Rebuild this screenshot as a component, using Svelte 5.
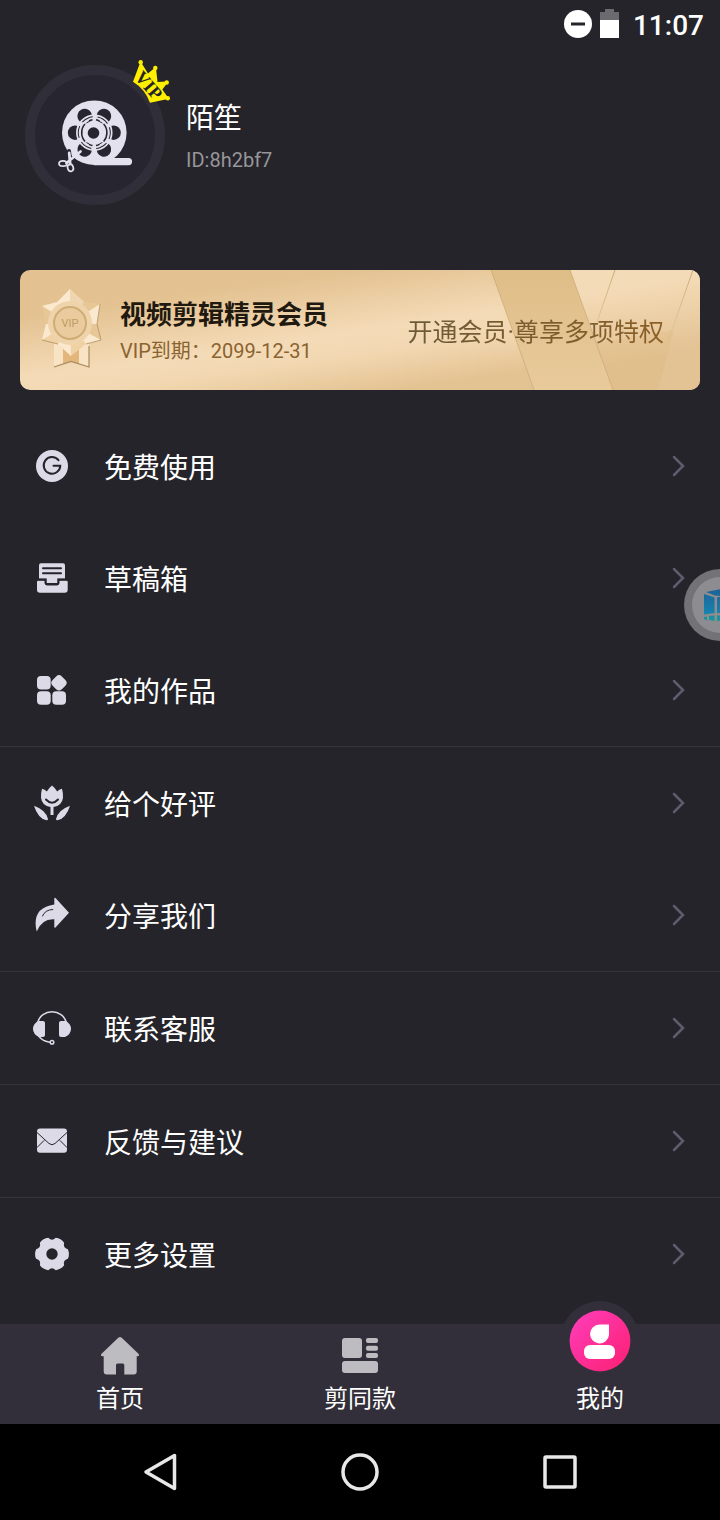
<script>
    const groups = [
        [
            { id: "free", label: "免费使用" },
            { id: "drafts", label: "草稿箱" },
            { id: "works", label: "我的作品" },
        ],
        [
            { id: "praise", label: "给个好评" },
            { id: "share", label: "分享我们" },
        ],
        [{ id: "support", label: "联系客服" }],
        [{ id: "feedback", label: "反馈与建议" }],
        [{ id: "settings", label: "更多设置" }],
    ];

    // outline of the settings gear: six lobes round the centre 20,20
    const at = (r, deg) => {
        const a = (deg * Math.PI) / 180;
        return `${(20 + r * Math.cos(a)).toFixed(2)} ${(20 + r * Math.sin(a)).toFixed(2)}`;
    };
    let gear = `M${at(16.6, -17)}`;
    for (let k = 0; k < 360; k += 60) {
        gear += `Q${at(18, k)} ${at(16.6, k + 17)}Q${at(12.4, k + 30)} ${at(16.6, k + 43)}`;
    }
    gear += "Z";

    const holes = [0, 60, 120, 180, 240, 300];
</script>

<main>
    <header class="status">
        <svg width="28" height="28" viewBox="0 0 28 28">
            <circle cx="14" cy="14" r="14" fill="#fff" />
            <rect x="7" y="12.500" width="14" height="3" fill="#25242a" />
        </svg>
        <svg class="battery" width="19" height="30" viewBox="0 0 19 30">
            <path d="M5 0h9v3h5v8H0V3h5z" fill="#6b6a6f" />
            <path d="M0 11h19v18H0z" fill="#fff" />
        </svg>
        <time>11:07</time>
    </header>

    <section class="profile">
        <div class="avatar">
            <svg width="120" height="120" viewBox="0 0 120 120">
                <path d="M59 83h34.500a3.500 3.500 0 0 1 0 7.200H59z" fill="#e4e1ee" />
                <circle cx="59.300" cy="57.700" r="32.300" fill="#e4e1ee" />
                {#each holes as deg}
                    <circle cx="78.500" cy="57.700" r="7.300" fill="#272530" transform="rotate({deg} 59.3 57.7)" />
                {/each}
                <g fill="none">
                    <circle cx="59.300" cy="57.700" r="15.500" stroke="#e4e1ee" stroke-width="5.500" />
                    <circle cx="59.300" cy="57.700" r="16" stroke="#272530" stroke-width="1" stroke-dasharray="12 4.750" transform="rotate(-20 59.3 57.7)" />
                    <path d="M50 49a13 13 0 0 0 0 17.400M68.600 49a13 13 0 0 1 0 17.400M54 46a13 13 0 0 1 3.500-1.200M61 44.800a13 13 0 0 1 3.500 1.200M54 69.400a13 13 0 0 0 3.500 1.200M61 70.600a13 13 0 0 0 3.500-1.200" stroke="#272530" stroke-width="1.500" />
                </g>
                <circle cx="58.500" cy="58" r="5.800" fill="#272530" />
                <g fill="none" stroke-linecap="round">
                    <path d="M34 76l1 8" stroke="#272530" stroke-width="4" />
                    <path d="M31.500 88l14-11.500M34.200 78l1 11" stroke="#e4e1ee" stroke-width="2.800" />
                    <ellipse cx="28" cy="88.500" rx="4" ry="2.700" stroke="#e4e1ee" stroke-width="1.700" />
                    <ellipse cx="35.500" cy="93" rx="2.800" ry="3.600" transform="rotate(-20 35 93)" stroke="#e4e1ee" stroke-width="1.700" />
                </g>
            </svg>
            <svg class="crown" width="40" height="46" viewBox="0 0 40 46">
                <g fill="#fff000">
                    <path d="M1 22.700L8 4h1.500l6.500 10.500L22.500 9h1.500l1.500 14 9-.5.8 1.500-5 6.500L36 38.500v1.500L18 43.700Q13 30 1 22.700z" />
                    <circle cx="8.700" cy="3.300" r="2.200" />
                    <circle cx="23.300" cy="9" r="2.200" />
                    <circle cx="34.700" cy="23.500" r="2.200" />
                    <circle cx="35.800" cy="39.200" r="2.200" />
                </g>
                <text x="16" y="32" text-anchor="middle" transform="rotate(49 16 27)">VIP</text>
            </svg>
        </div>
        <div class="info">
            <h1>陌笙</h1>
            <p>ID:8h2bf7</p>
        </div>
    </section>

    <a class="card" href="#vip">
        <svg class="sheen" viewBox="0 0 680 120" preserveAspectRatio="xMaxYMid slice">
            <defs>
                <linearGradient id="gold" gradientUnits="userSpaceOnUse" x1="0" y1="0" x2="25" y2="178">
                    <stop offset="0" stop-color="#e3c190" />
                    <stop offset="0.25" stop-color="#e3c190" />
                    <stop offset="0.6" stop-color="#f4dbb7" />
                    <stop offset="0.72" stop-color="#f2d8b2" />
                    <stop offset="0.95" stop-color="#e4c392" />
                </linearGradient>
                <linearGradient id="band" x1="0" y1="0" x2="0" y2="1">
                    <stop offset="0" stop-color="#dfbd87" />
                    <stop offset="1" stop-color="#e8ca9b" />
                </linearGradient>
                <linearGradient id="edge" gradientUnits="userSpaceOnUse" x1="600" y1="0" x2="620" y2="120">
                    <stop offset="0.15" stop-color="#f4dbb7" />
                    <stop offset="0.75" stop-color="#e3c293" />
                </linearGradient>
                <linearGradient id="crease" gradientUnits="userSpaceOnUse" x1="0" y1="0" x2="0" y2="80">
                    <stop offset="0" stop-color="#c9a873" />
                    <stop offset="1" stop-color="#c9a873" stop-opacity="0" />
                </linearGradient>
            </defs>
            <rect width="680" height="120" fill="url(#gold)" />
            <path d="M550 0h130v120h-87z" fill="url(#edge)" />
            <path d="M577 73l-13 47h74l16-60z" fill="#deb981" opacity="0.3" />
            <path d="M471 0h79l43 120h-79z" fill="url(#band)" />
            <path d="M471 0l43 120M550 0l43 120" stroke="#c9a873" stroke-width="1" opacity="0.7" />
            <path d="M595 0l-18 52M673 0l-28 80" stroke="url(#crease)" stroke-width="1" />
        </svg>
        <svg class="medal" width="64" height="84" viewBox="0 0 64 84">
            <path d="M14 55v24l17-5 18 5V55z" fill="#f8e3c4" />
            <path d="M23 56v20l8-2.500 8 2.500V56z" fill="#e3b67c" />
            <path d="M14 79l17-5.500L49 79V58" fill="none" stroke="#a98a60" stroke-width="1.200" />
            <path d="M30 1l14 13 16 2-3 20 4 16-15 4-15 12-13-12-16-4 4-16-4-18 17-4z" fill="#efd1a3" />
            <path d="M30 1l14 13-14 21-13-21zM60 16l-3 20-27-1zM61 52l-15 4-16-21zM31 68L18 56l12-21zM2 52l4-16 24-1zM2 18l15-4 13 21z" fill="#fae9cf" />
            <path d="M30 1v34l14-21zM60 16L30 35l14-21zM61 52L30 35l27 1zM2 18l28 17-24 1z" fill="#dfb983" opacity="0.4" />
            <path d="M60 16l-3 20 4 16-15 4M2 52l16 4" fill="none" stroke="#b09065" stroke-width="1" opacity="0.8" />
            <circle cx="30" cy="35" r="22" fill="#efd4ab" />
            <circle cx="30" cy="35" r="16" fill="#e9cb9d" stroke="#d0ac76" stroke-width="2" />
            <text x="30" y="39" text-anchor="middle">VIP</text>
        </svg>
        <div class="member">
            <h2>视频剪辑精灵会员</h2>
            <p>VIP到期：2099-12-31</p>
        </div>
        <span class="slogan">开通会员·尊享多项特权</span>
    </a>

    <nav class="menu">
        {#each groups as items}
            <ul>
                {#each items as item}
                    <li>
                        <a href="#{item.id}">
                            <svg class="icon" width="40" height="40" viewBox="0 0 40 40" fill="#dddae8">
                                {#if item.id === "free"}
                                    <circle cx="20" cy="20" r="16" />
                                    <path class="cut" d="M26.500 14.200A8.300 8.300 0 1 0 28.300 19.700H21.500" />
                                {:else if item.id === "drafts"}
                                    <path d="M9 5.300h22a2 2 0 0 1 2 2V20.500h-7.500v4.500h-11v-4.500H7V7.300a2 2 0 0 1 2-2z" />
                                    <path class="cut" d="M11 10.300h18M11 15.200h18" />
                                    <path d="M7 22.300h6.500v2.200a2 2 0 0 0 2 2h9a2 2 0 0 0 2-2v-2.200H34a1.700 1.700 0 0 1 1.700 1.700v7.700a3 3 0 0 1-3 3H8a3 3 0 0 1-3-3V24a1.700 1.700 0 0 1 2-1.700z" />
                                    <path class="cut" d="M5 21.700h8.500v2.800a2 2 0 0 0 2 2h9a2 2 0 0 0 2-2v-2.800H36" />
                                {:else if item.id === "works"}
                                    <rect x="5" y="6" width="13.700" height="13.500" rx="4" />
                                    <rect x="5" y="21.200" width="13.700" height="13.500" rx="4" />
                                    <rect x="20.300" y="21.200" width="13.700" height="13.500" rx="4" />
                                    <rect x="20.500" y="6.300" width="13" height="13" rx="4" transform="rotate(45 27 12.8)" />
                                {:else if item.id === "praise"}
                                    <path d="M10 5.800q3 .5 4.800 2.700 2-3.500 5.200-6 3.200 2.500 5.200 6 1.800-2.200 4.800-2.700 1.200 4 1 9-1 8-9.500 9.200V32h-3v-8Q10 23 9 14.800q-.2-5 1-9z" />
                                    <path class="cut" d="M14 16.500q6 6.500 12 0" />
                                    <path d="M2 22.700Q14 27 16 36q0 1.300-1.500 1.300Q6 35.500 2 22.700zM38 22.700Q26 27 24 36q0 1.300 1.500 1.300Q34 35.500 38 22.700z" />
                                {:else if item.id === "share"}
                                    <path d="M22.300 3.500q.3-1 1.200-.5L37 17.700 23.500 32.500q-1 .8-1.200-.5v-7.700Q10 23.500 4.700 36.500-1 13 22.300 9.500z" />
                                    <path class="cut thin" d="M10.500 21q2.500-6.300 10.300-6.500" />
                                {:else if item.id === "support"}
                                    <path class="line" d="M5.500 15C9 0 31 0 34.500 15M6.500 28q4.500 5.500 11.500 6.300" />
                                    <path d="M6 13h5q2 0 2 2v12q0 2-2 2H7Q1 26 1 21q0-5 5-8zM34 13h-5q-2 0-2 2v12q0 2 2 2h4q6-3 6-8 0-5-5-8z" />
                                    <circle class="line" cx="20" cy="34.300" r="1.800" />
                                {:else if item.id === "feedback"}
                                    <rect x="5" y="7.500" width="30" height="24.200" rx="3" />
                                    <path class="cut thin" d="M5 11.500l12 11q3 2.500 6 0l12-11M5 26.500l7-7M35 26.500l-7-7" />
                                {:else}
                                    <path d={gear} />
                                    <circle cx="20" cy="20" r="5.700" fill="#25242a" />
                                {/if}
                            </svg>
                            <span>{item.label}</span>
                            <svg class="arrow" width="16" height="24" viewBox="0 0 16 24">
                                <path d="M2 3l9 9-9 9" />
                            </svg>
                        </a>
                    </li>
                {/each}
            </ul>
        {/each}
    </nav>

    <nav class="tabs">
        <a href="#home">
            <svg width="40" height="40" viewBox="0 0 40 40" fill="#bdbcc0">
                <path d="M18.300 1.800q1.700-1.600 3.400 0L38.700 18q1 2-1 2.200H36.700V35.500a3 3 0 0 1-3 3H24.300V29q0-1.500-1.500-1.500h-5.300q-1.500 0-1.500 1.500v9.500H6.700a3 3 0 0 1-3-3V20.200H2.300q-2-.2-1-2.200z" />
            </svg>
            <span>首页</span>
        </a>
        <a href="#templates">
            <svg width="40" height="40" viewBox="0 0 40 40" fill="#bdbcc0">
                <rect x="2" y="2" width="20" height="20" rx="3" />
                <rect x="26" y="2" width="12" height="5" rx="2" />
                <rect x="26" y="9.700" width="12" height="5" rx="2" />
                <rect x="26" y="17" width="12" height="5" rx="2" />
                <rect x="2" y="25" width="36" height="12" rx="3" />
            </svg>
            <span>剪同款</span>
        </a>
        <a class="active" href="#mine">
            <svg width="80" height="80" viewBox="0 0 80 80">
                <defs>
                    <linearGradient id="pink" x1="0" y1="0" x2="1" y2="1">
                        <stop offset="0.1" stop-color="#ff3bb4" />
                        <stop offset="0.9" stop-color="#fc2279" />
                    </linearGradient>
                </defs>
                <circle cx="40" cy="40" r="40" fill="#322f3a" />
                <circle cx="40" cy="40" r="30.400" fill="url(#pink)" />
                <path d="M49 23.500V34a9.500 9.500 0 1 1-9.500-10.500z" fill="#fff" />
                <rect x="24" y="44" width="31" height="14" rx="6" fill="#fff" />
            </svg>
            <span>我的</span>
        </a>
    </nav>

    <footer class="system">
        <button aria-label="返回">
            <svg width="48" height="48" viewBox="0 0 48 48">
                <path d="M38.500 7.500v33L10 24z" />
            </svg>
        </button>
        <button aria-label="主屏幕">
            <svg width="48" height="48" viewBox="0 0 48 48">
                <circle cx="24" cy="24" r="17" />
            </svg>
        </button>
        <button aria-label="最近任务">
            <svg width="48" height="48" viewBox="0 0 48 48">
                <rect x="9" y="9" width="30" height="30" rx="1" />
            </svg>
        </button>
    </footer>

    <button class="float" aria-label="悬浮球">
        <svg width="72" height="72" viewBox="0 0 72 72">
            <defs>
                <linearGradient id="cube" gradientUnits="userSpaceOnUse" x1="0" y1="20" x2="0" y2="52">
                    <stop offset="0" stop-color="#1a6296" />
                    <stop offset="0.7" stop-color="#1780ae" />
                    <stop offset="1" stop-color="#189a96" />
                </linearGradient>
            </defs>
            <circle cx="36" cy="36" r="36" fill="#737277" />
            <circle cx="36" cy="36" r="28" fill="#8d8c90" />
            <path d="M20 25l10.500 3.500V44L20 45.500zM22 23l15-3 15 3-15 4-6-.5zM33 28.500l4-1V44h-4zM54 25l-15 3.500V44l15 1.500zM20 48l3-.5v4l-3-1.500zM25 47l5.500-.5V52L25 51zM33 46.500h5V52h-5z" fill="url(#cube)" />
        </svg>
    </button>
</main>

<style>
    :global(body) {
        background-color: #25242a;
    }
    main {
        position: relative;
        overflow: hidden;
        color: white;
        background-color: #25242a;
        font-family: Roboto, "Noto Sans CJK SC", sans-serif;
    }
    h1,
    h2,
    p,
    ul {
        margin: 0;
        padding: 0;
        font-weight: 400;
    }
    ul {
        list-style: none;
    }
    a {
        color: inherit;
        text-decoration: none;
    }
    button {
        padding: 0;
        border: none;
        background: none;
    }
    svg {
        display: block;
        flex-shrink: 0;
    }

    .status {
        height: 48px;
        padding: 0 16px;
        display: flex;
        justify-content: flex-end;
        align-items: center;
        gap: 8px;
    }
    .status time {
        margin-left: 6px;
        padding-top: 3px;
        font-size: 28px;
        font-weight: 500;
        line-height: 40px;
    }

    .profile {
        display: flex;
        align-items: center;
        gap: 21px;
        padding: 17px 25px 65px;
    }
    .avatar {
        position: relative;
        border: 10px solid #302e39;
        border-radius: 50%;
        background-color: #272530;
    }
    .crown {
        position: absolute;
        top: -16px;
        right: -17px;
    }
    .crown text {
        font-family: "Liberation Serif", serif;
        font-size: 18px;
        font-weight: 700;
        fill: #25242a;
    }
    .info {
        display: flex;
        flex-direction: column;
        gap: 10px;
    }
    h1,
    .menu span {
        font-family: "Noto Sans CJK SC", sans-serif;
        font-size: 28px;
        line-height: 40px;
    }
    .info p {
        color: #97969a;
        font-size: 20px;
        line-height: 28px;
    }

    .card {
        position: relative;
        display: flex;
        align-items: center;
        gap: 16px;
        height: 120px;
        margin: 0 20px;
        padding: 0 36px 0 20px;
        box-sizing: border-box;
        border-radius: 10px;
        overflow: hidden;
    }
    .sheen {
        position: absolute;
        inset: 0;
        width: 100%;
        height: 100%;
    }
    .medal,
    .member,
    .slogan {
        position: relative;
    }
    .medal text {
        font-size: 11px;
        fill: #c39a62;
    }
    .member {
        display: flex;
        flex-direction: column;
        gap: 4px;
        flex: 1;
        padding-top: 2px;
        white-space: nowrap;
    }
    h2 {
        color: #1f190f;
        font-size: 26px;
        font-weight: 700;
        line-height: 36px;
    }
    .member p {
        color: #8a6330;
        font-size: 20px;
        line-height: 28px;
    }
    .slogan {
        padding-top: 6px;
        font-size: 25px;
        line-height: 36px;
        white-space: nowrap;
        color: transparent;
        background: linear-gradient(90deg, #6b5a38, #8a5f26);
        background-clip: text;
    }

    .menu {
        padding: 20px 0 14px;
    }
    .menu ul + ul {
        border-top: 1px solid #36353c;
    }
    .menu a {
        display: flex;
        align-items: center;
        gap: 32px;
        height: 112px;
        padding: 0 32px;
    }
    .menu span {
        flex: 1;
    }
    .cut {
        fill: none;
        stroke: #25242a;
        stroke-width: 2;
        stroke-linecap: round;
    }
    .thin {
        stroke-width: 1;
    }
    .line {
        fill: none;
        stroke: #dddae8;
        stroke-width: 1.5;
    }
    .arrow path {
        fill: none;
        stroke: #5f5c6d;
        stroke-width: 2.5;
        stroke-linecap: round;
    }

    .tabs {
        display: flex;
        background-color: #322f3a;
    }
    .tabs a {
        position: relative;
        flex: 1;
        display: flex;
        flex-direction: column;
        align-items: center;
        justify-content: flex-end;
        gap: 5px;
        height: 93px;
        padding-bottom: 7px;
        font-size: 24px;
        line-height: 36px;
    }
    .active svg {
        position: absolute;
        top: -23px;
    }

    .system {
        height: 96px;
        display: flex;
        justify-content: center;
        align-items: center;
        gap: 152px;
        background-color: black;
    }
    .system svg {
        fill: none;
        stroke: #e8e8e8;
        stroke-width: 3.5;
        stroke-linejoin: round;
    }

    .float {
        position: absolute;
        top: 569px;
        right: -36px;
    }
</style>
